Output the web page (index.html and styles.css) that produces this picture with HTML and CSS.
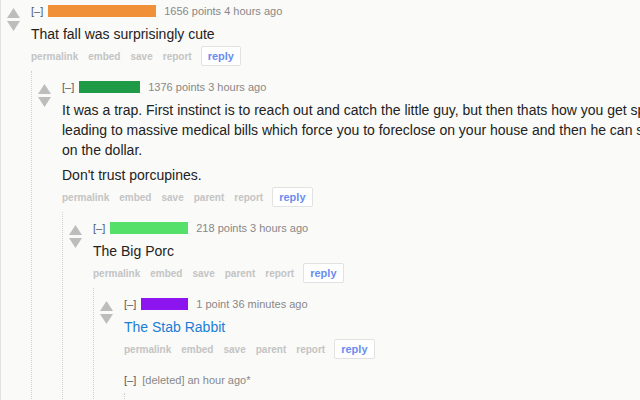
FILE: index.html
```html
<!DOCTYPE html>
<html lang="en">
<head>
<meta charset="utf-8">
<title>Comments</title>
<link rel="stylesheet" href="styles.css">
</head>
<body>
<div class="thread">
  <div class="comment comment--root">
    <div class="midcol">
      <svg class="arrow" width="13" height="10" viewBox="0 0 13 10"><polygon points="6.5,0 13,10 0,10"/></svg>
      <svg class="arrow" width="13" height="10" viewBox="0 0 13 10"><polygon points="0,0 13,0 6.5,10"/></svg>
    </div>
    <div class="entry">
      <div class="tagline"><span class="expand">[–]</span><span class="author author--orange"></span><span class="meta">1656 points 4 hours ago</span></div>
      <div class="md"><p>That fall was surprisingly cute</p></div>
      <ul class="actions"><li>permalink</li><li>embed</li><li>save</li><li>report</li><li class="reply">reply</li></ul>

      <div class="child">
        <div class="comment">
          <div class="midcol">
            <svg class="arrow" width="13" height="10" viewBox="0 0 13 10"><polygon points="6.5,0 13,10 0,10"/></svg>
            <svg class="arrow" width="13" height="10" viewBox="0 0 13 10"><polygon points="0,0 13,0 6.5,10"/></svg>
          </div>
          <div class="entry">
            <div class="tagline"><span class="expand">[–]</span><span class="author author--green"></span><span class="meta">1376 points 3 hours ago</span></div>
            <div class="md">
              <p>It was a trap. First instinct is to reach out and catch the little guy, but then thats how you get spiked<br>leading to massive medical bills which force you to foreclose on your house and then he can swoop in for pennies<br>on the dollar.</p>
              <p>Don't trust porcupines.</p>
            </div>
            <ul class="actions"><li>permalink</li><li>embed</li><li>save</li><li>parent</li><li>report</li><li class="reply">reply</li></ul>

            <div class="child">
              <div class="comment">
                <div class="midcol">
                  <svg class="arrow" width="13" height="10" viewBox="0 0 13 10"><polygon points="6.5,0 13,10 0,10"/></svg>
                  <svg class="arrow" width="13" height="10" viewBox="0 0 13 10"><polygon points="0,0 13,0 6.5,10"/></svg>
                </div>
                <div class="entry">
                  <div class="tagline"><span class="expand">[–]</span><span class="author author--lime"></span><span class="meta">218 points 3 hours ago</span></div>
                  <div class="md"><p>The Big Porc</p></div>
                  <ul class="actions"><li>permalink</li><li>embed</li><li>save</li><li>parent</li><li>report</li><li class="reply">reply</li></ul>

                  <div class="child">
                    <div class="comment">
                      <div class="midcol">
                        <svg class="arrow" width="13" height="10" viewBox="0 0 13 10"><polygon points="6.5,0 13,10 0,10"/></svg>
                        <svg class="arrow" width="13" height="10" viewBox="0 0 13 10"><polygon points="0,0 13,0 6.5,10"/></svg>
                      </div>
                      <div class="entry">
                        <div class="tagline"><span class="expand">[–]</span><span class="author author--purple"></span><span class="meta">1 point 36 minutes ago</span></div>
                        <div class="md"><p><a class="link" href="#">The Stab Rabbit</a></p></div>
                        <ul class="actions"><li>permalink</li><li>embed</li><li>save</li><li>parent</li><li>report</li><li class="reply">reply</li></ul>
                      </div>
                    </div>
                    <div class="comment">
                      <div class="midcol"></div>
                      <div class="entry">
                        <div class="tagline"><span class="expand">[–]</span><span class="meta">[deleted] an hour ago*</span></div>
                        <div class="child child--tail"></div>
                      </div>
                    </div>
                  </div>
                </div>
              </div>
            </div>
          </div>
        </div>
      </div>
    </div>
  </div>
</div>
</body>
</html>
```
FILE: styles.css
```css
html, body {
  overflow: hidden;
}
body {
  margin: 0;
  min-height: 400px;
  background: #fafaf8;
  border-left: 1px solid #e3e3e3;
  font-family: "Liberation Sans", Arial, sans-serif;
  color: #222;
}
.comment {
  display: grid;
  grid-template-columns: 30px 1fr;
  padding-top: 8px;
}
.comment--root {
  padding-top: 3px;
}
.midcol {
  display: flex;
  flex-direction: column;
  gap: 3px;
  padding: 5px 0 0 6px;
}
.arrow {
  display: block;
  fill: #bdbdbd;
}
.entry {
  min-width: 0;
}
.tagline {
  display: flex;
  align-items: center;
  height: 16px;
  font-size: 11px;
  line-height: 16px;
  white-space: nowrap;
}
.expand {
  color: #505a66;
  margin-right: 5px;
}
.author {
  display: inline-block;
  height: 12px;
  margin-right: 7px;
}
.author--orange { width: 108px; background: #f0913a; }
.author--green { width: 61px; background: #1f9b47; }
.author--lime { width: 78px; background: #55e06a; }
.author--purple { width: 47px; background: #8c15ef; }
.meta {
  color: #888;
  margin-left: 1px;
}
.md {
  margin-top: 5px;
  font-size: 14px;
  line-height: 20px;
  white-space: nowrap;
}
.md p {
  margin: 0;
}
.md p + p {
  margin-top: 5px;
}
.link {
  color: #1a7dd6;
  text-decoration: none;
}
.actions {
  list-style: none;
  margin: 2px 0 5px;
  padding: 0;
  display: flex;
  align-items: center;
  gap: 10px;
  height: 20px;
  font-size: 10px;
  font-weight: bold;
  color: #c4c4c4;
}
.actions .reply {
  box-sizing: border-box;
  height: 20px;
  line-height: 18px;
  padding: 0 6px;
  margin-left: -1px;
  border: 1px solid #e2e2e2;
  border-radius: 2px;
  background: #fff;
  font-size: 11px;
  color: #6a8cf0;
}
.child {
  margin-top: 5px;
  border-left: 1px dotted #cfcfcf;
}
.child--tail {
  height: 60px;
}
```
